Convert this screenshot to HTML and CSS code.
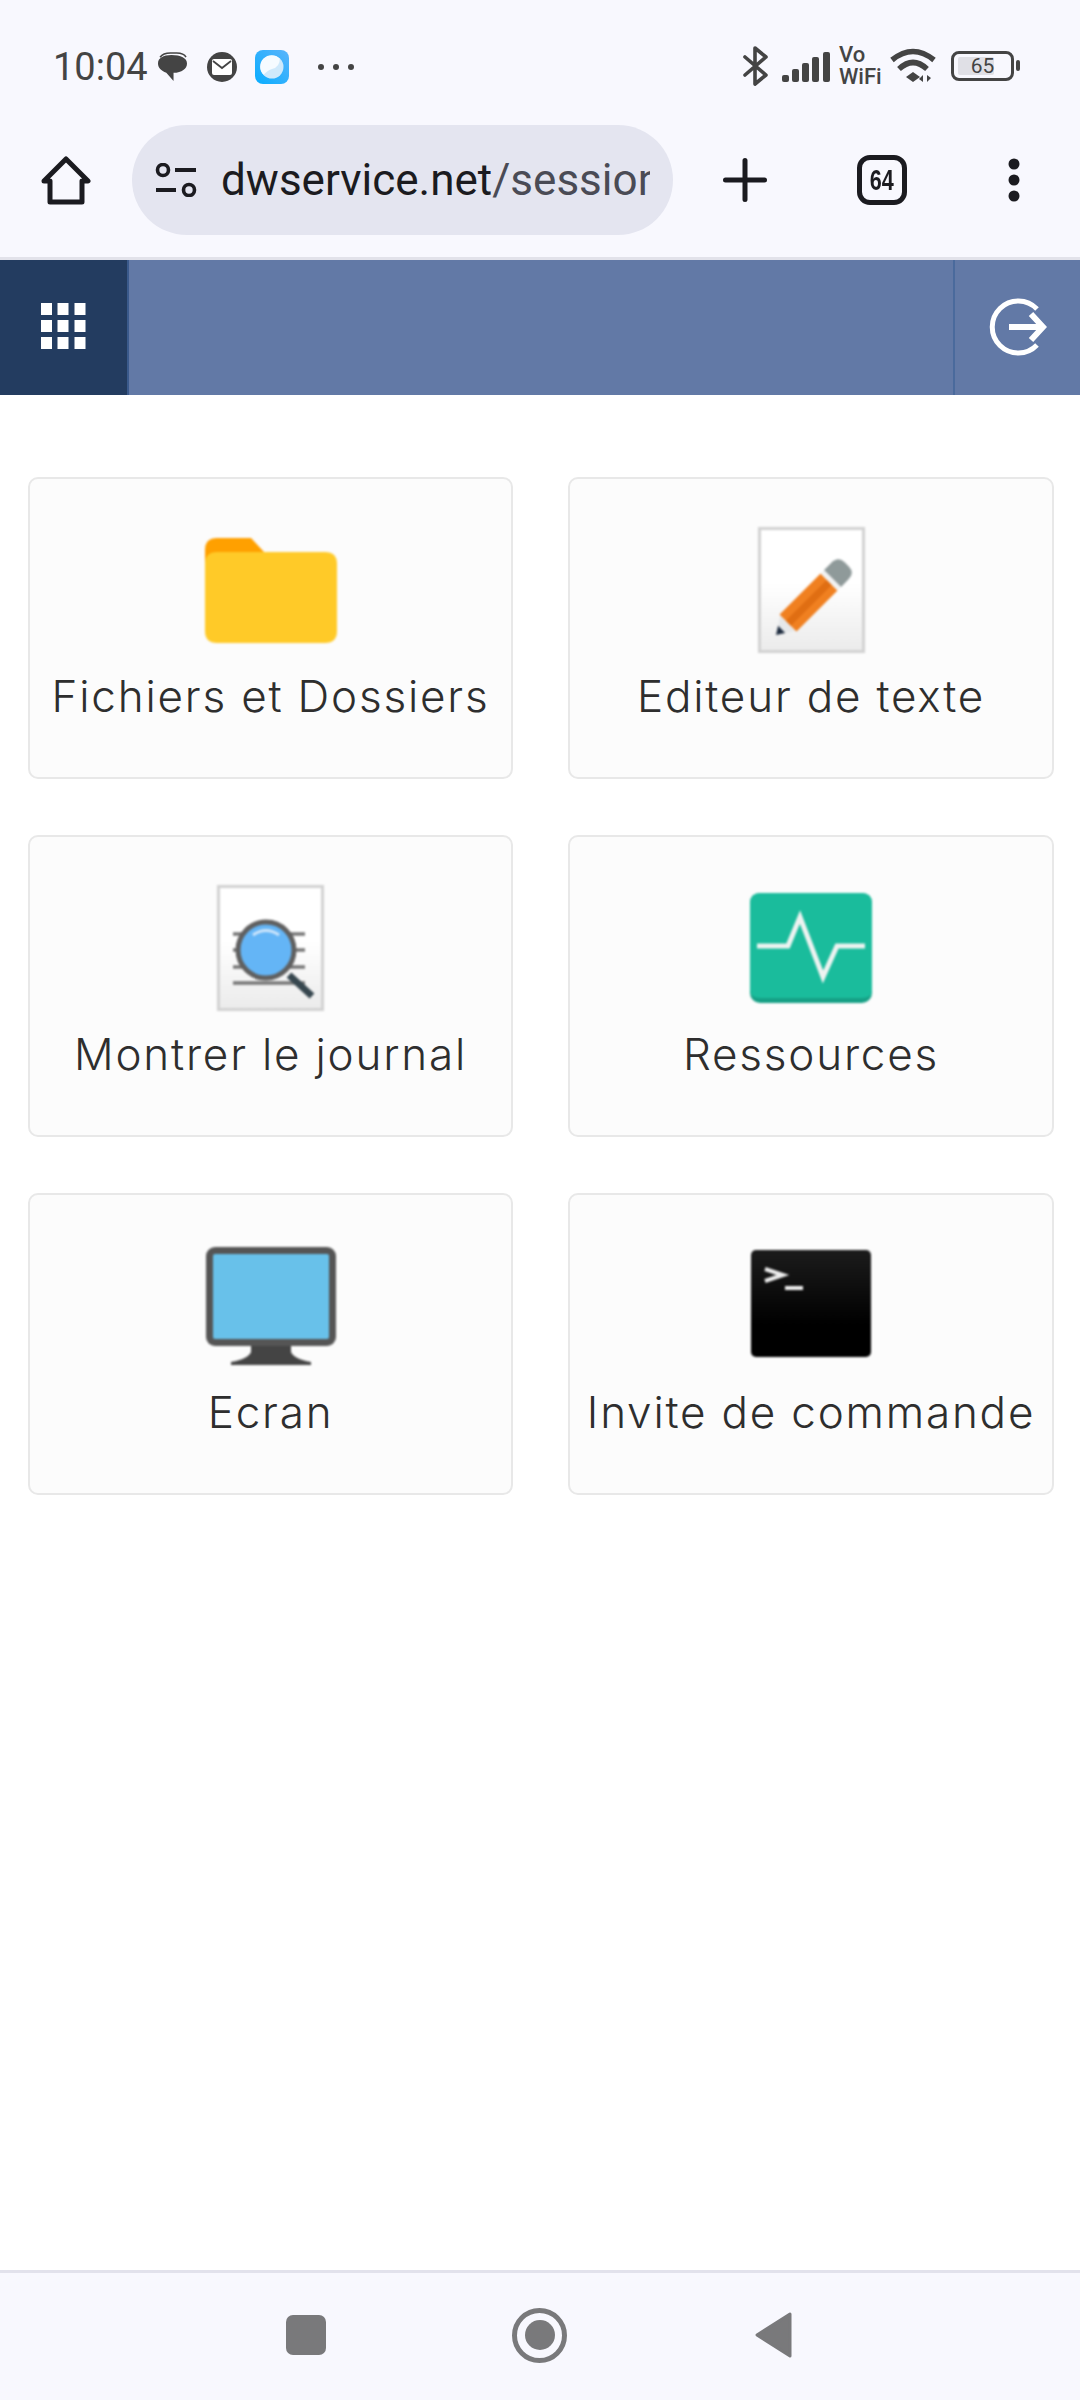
FILE: index.html
```html
<!DOCTYPE html>
<html>
<head>
    <title>DWService</title>
    <link rel="stylesheet" href="styles.css">
</head>

<body>
    <div class="status-bar">
        <div class="status-left">
            <span class="clock">10:04</span>
            <svg class="ic-bubble" width="29" height="29" viewBox="0 0 28 28">
                <path d="M2 5 Q5 1 12 1 H18 Q25 1 27 5" fill="none" stroke="#444" stroke-width="1.5"/>
                <path d="M13 3 C5 3 0 6 0 11 C0 15 3 18 8 20 L15 28 V20 C23 20 28 16 28 11 C28 6 22 3 13 3 Z" fill="#444"/>
            </svg>
            <svg class="ic-mail" width="30" height="30" viewBox="0 0 30 30">
                <circle cx="15" cy="15" r="15" fill="#444"/>
                <rect x="5" y="7" width="20" height="16" rx="2" fill="#fff"/>
                <path d="M6 9 L15 16 L24 9" fill="none" stroke="#444" stroke-width="1.8"/>
            </svg>
            <svg class="ic-app" width="34" height="34" viewBox="0 0 34 34">
                <defs>
                    <linearGradient id="appBg" x1="1" y1="0" x2="0" y2="1">
                        <stop offset="0" stop-color="#5ab4fb"/>
                        <stop offset="1" stop-color="#08adff"/>
                    </linearGradient>
                </defs>
                <rect width="34" height="34" rx="8" fill="url(#appBg)"/>
                <circle cx="17" cy="17" r="11.5" fill="#cfe9fb"/>
                <path d="M8.5 24.8 A11.5 11.5 0 0 1 24.8 8.5 Q25 17 17 19 Q13 20 8.5 24.8 Z" fill="#f6fbff"/>
            </svg>
            <div class="more-dots"><i></i><i></i><i></i></div>
        </div>
        <div class="status-right">
            <svg class="ic-bt" width="26" height="40" viewBox="0 0 26 40">
                <path d="M2 11 L23 29 L12 38 V2 L23 11 L2 29" fill="none" stroke="#444" stroke-width="3.6" stroke-linejoin="round" stroke-linecap="round"/>
            </svg>
            <svg class="ic-signal" width="48" height="30" viewBox="0 0 48 30">
                <rect x="0" y="23" width="7" height="7" rx="2" fill="#444"/>
                <rect x="10" y="17" width="7" height="13" rx="2" fill="#444"/>
                <rect x="20" y="11" width="7" height="19" rx="2" fill="#444"/>
                <rect x="30" y="5" width="7" height="25" rx="2" fill="#444"/>
                <rect x="41" y="0" width="7" height="30" rx="2" fill="#444"/>
            </svg>
            <div class="vowifi"><span>Vo</span><span>WiFi</span></div>
            <svg class="ic-wifi" width="46" height="35" viewBox="0 0 46 35">
                <path d="M2 12 Q23 -5 44 12" fill="none" stroke="#444" stroke-width="5.500"/>
                <path d="M9 21 Q23 8 37 21" fill="none" stroke="#444" stroke-width="5.500"/>
                <path d="M16 29 L23 24 L30 29 L23 34 Z" fill="#444"/>
                <path d="M33 34 V27 L29 31 Z M37 27 V34 L41 30 Z" fill="#444"/>
            </svg>
            <div class="battery">
                <div class="battery-box"><span class="battery-fill"></span><span class="battery-num">65</span></div>
                <span class="battery-nub"></span>
            </div>
        </div>
    </div>

    <div class="toolbar">
        <svg class="ic-home" width="50" height="50" viewBox="0 0 50 50">
            <path d="M3 26 L25 4 L47 26 H41 V47 H9 V26 Z" fill="none" stroke="#1b1b20" stroke-width="5" stroke-linejoin="round"/>
        </svg>
        <div class="url-pill">
            <svg class="ic-tune" width="42" height="34" viewBox="0 0 42 34">
                <circle cx="8" cy="7" r="5.500" fill="none" stroke="#1b1b20" stroke-width="3.6"/>
                <path d="M20 7 H41 M1 27 H21" stroke="#1b1b20" stroke-width="4"/>
                <circle cx="34" cy="27" r="5.500" fill="none" stroke="#1b1b20" stroke-width="3.6"/>
            </svg>
            <div class="url-text"><span class="url-host">dwservice.net</span><span class="url-path">/session</span></div>
        </div>
        <svg class="ic-plus" width="44" height="44" viewBox="0 0 44 44">
            <path d="M2.500 22 H41.500 M22 2.500 V41.500" stroke="#1b1b20" stroke-width="5" stroke-linecap="round"/>
        </svg>
        <div class="tab-count"><span>64</span></div>
        <svg class="ic-menu" width="12" height="44" viewBox="0 0 12 44">
            <circle cx="6" cy="6" r="5.500" fill="#1b1b20"/>
            <circle cx="6" cy="22" r="5.500" fill="#1b1b20"/>
            <circle cx="6" cy="38" r="5.500" fill="#1b1b20"/>
        </svg>
    </div>

    <div class="header">
        <div class="header-menu">
            <svg width="45" height="46" viewBox="0 0 45 46">
                <path fill="#fff" d="M0 0h11v12H0z M16.500 0h11v12h-11z M33.500 0h11v12h-11z M0 17h11v12H0z M16.500 17h11v12h-11z M33.500 17h11v12h-11z M0 34h11v12H0z M16.500 34h11v12h-11z M33.500 34h11v12h-11z"/>
            </svg>
        </div>
        <div class="header-fill"></div>
        <div class="header-exit">
            <svg width="58" height="60" viewBox="0 0 58 60">
                <path d="M48 12 A26 26 0 1 0 48 48" fill="none" stroke="#fff" stroke-width="5"/>
                <path d="M20 30 H52" stroke="#fff" stroke-width="6"/>
                <path d="M42 17 L54 30 L42 43" fill="none" stroke="#fff" stroke-width="6"/>
            </svg>
        </div>
    </div>

    <div class="apps">
        <div class="app-card">
            <div class="app-icon">
                <svg class="soft" width="132" height="105" viewBox="0 0 132 105">
                    <path d="M0 40 V12 Q0 0 12 0 H46 L60 15 V40 Z" fill="#ffa000"/>
                    <path d="M0 26 Q0 14 12 14 H120 Q132 14 132 26 V93 Q132 105 120 105 H12 Q0 105 0 93 Z" fill="#ffca28"/>
                </svg>
            </div>
            <div class="app-label">Fichiers et Dossiers</div>
        </div>
        <div class="app-card">
            <div class="app-icon">
                <svg class="soft" width="107" height="126" viewBox="0 0 107 126">
                    <defs>
                        <linearGradient id="docBg" x1="0" y1="0" x2="0" y2="1">
                            <stop offset="0.45" stop-color="#ffffff"/>
                            <stop offset="1" stop-color="#ebebeb"/>
                        </linearGradient>
                    </defs>
                    <rect x="1.500" y="1.500" width="104" height="123" fill="url(#docBg)" stroke="#d2d2d2" stroke-width="3"/>
                    <g transform="translate(18 108) rotate(-45)">
                        <path d="M0 0 L17 -11 V11 Z" fill="#e6e8ea"/>
                        <path d="M0 0 L8 -5 V5 Z" fill="#1f2d40"/>
                        <rect x="17" y="-12" width="58" height="24" fill="#f08020"/>
                        <rect x="17" y="-3" width="58" height="7" fill="#e06e12"/>
                        <rect x="75" y="-12" width="5" height="24" fill="#f2f2f2"/>
                        <path d="M80 -12 H90 Q100 -12 100 -3 V3 Q100 12 90 12 H80 Z" fill="#8f9a9a"/>
                    </g>
                </svg>
            </div>
            <div class="app-label">Editeur de texte</div>
        </div>
        <div class="app-card">
            <div class="app-icon">
                <svg class="soft" width="107" height="126" viewBox="0 0 107 126">
                    <defs>
                        <linearGradient id="logBg" x1="0" y1="0" x2="0" y2="1">
                            <stop offset="0.45" stop-color="#ffffff"/>
                            <stop offset="1" stop-color="#ebebeb"/>
                        </linearGradient>
                    </defs>
                    <rect x="1.500" y="1.500" width="104" height="123" fill="url(#logBg)" stroke="#d2d2d2" stroke-width="3"/>
                    <path d="M16 49 H88 M16 65 H88 M16 82 H88 M16 98 H88" stroke="#777" stroke-width="3.500"/>
                    <path d="M72 90 L95 111" stroke="#37474f" stroke-width="7"/>
                    <circle cx="49" cy="65" r="28" fill="#64b5f6" stroke="#606060" stroke-width="5"/>
                    <path d="M36 50 Q49 41 62 50" fill="none" stroke="#cfe6fb" stroke-width="3"/>
                </svg>
            </div>
            <div class="app-label">Montrer le journal</div>
        </div>
        <div class="app-card">
            <div class="app-icon">
                <svg class="soft" width="122" height="110" viewBox="0 0 122 110">
                    <rect width="122" height="110" rx="10" fill="#16a085"/>
                    <path d="M0 10 Q0 0 10 0 H112 Q122 0 122 10 V97 Q122 105 112 105 H10 Q0 105 0 97 Z" fill="#1abc9c"/>
                    <path d="M7 53 H38 L50 24 L73 84 L87 53 H115" fill="none" stroke="#eef3f1" stroke-width="5"/>
                </svg>
            </div>
            <div class="app-label">Ressources</div>
        </div>
        <div class="app-card">
            <div class="app-icon">
                <svg class="soft" width="130" height="118" viewBox="0 0 130 118">
                    <path d="M45 95 H85 V105 Q88 112 105 115 V118 H25 V115 Q42 112 45 105 Z" fill="#444"/>
                    <rect width="130" height="99" rx="9" fill="#555"/>
                    <rect x="7" y="7" width="116" height="85" rx="2" fill="#68c1ea"/>
                </svg>
            </div>
            <div class="app-label">Ecran</div>
        </div>
        <div class="app-card">
            <div class="app-icon">
                <svg class="soft term-icon" width="120" height="107" viewBox="0 0 120 107">
                    <defs>
                        <linearGradient id="termBg" x1="0" y1="0" x2="0" y2="1">
                            <stop offset="0" stop-color="#1c1c1c"/>
                            <stop offset="0.7" stop-color="#000"/>
                        </linearGradient>
                    </defs>
                    <rect width="120" height="107" rx="5" fill="url(#termBg)"/>
                    <path d="M14 19 L32 25 L14 31" fill="none" stroke="#eee" stroke-width="4"/>
                    <path d="M34 38 H52" stroke="#eee" stroke-width="4"/>
                </svg>
            </div>
            <div class="app-label">Invite de commande</div>
        </div>
    </div>

    <div class="nav-bar">
        <span class="nav-square"></span>
        <span class="nav-home"><span></span></span>
        <svg class="nav-back" width="37" height="46" viewBox="0 0 37 46">
            <path d="M35 2 V44 L2 23 Z" fill="#79797b" stroke="#79797b" stroke-width="3" stroke-linejoin="round"/>
        </svg>
    </div>
</body>
</html>
```

FILE: styles.css
```css
* {
    box-sizing: border-box;
}

html, body {
    margin: 0;
    padding: 0;
}

body {
    width: 1080px;
    height: 2400px;
    display: flex;
    flex-direction: column;
    background: #fff;
    font-family: 'Roboto', sans-serif;
    overflow: hidden;
}

svg {
    display: block;
    flex: none;
}

.soft {
    filter: blur(0.8px);
}

/* status bar */
.status-bar {
    height: 125px;
    padding: 0 60px 0 53px;
    display: flex;
    justify-content: space-between;
    align-items: center;
    background: #f8f8fe;
}

.status-left, .status-right {
    display: flex;
    align-items: center;
}

.status-left {
    padding-top: 8px;
}

.status-right {
    padding-top: 6px;
}

.clock {
    font-size: 38px;
    color: #444;
    width: 105px;
}

.ic-mail {
    margin-left: 20px;
}

.ic-app {
    margin-left: 18px;
}

.more-dots {
    display: flex;
    gap: 9px;
    margin-left: 29px;
}

.more-dots i {
    width: 6px;
    height: 6px;
    border-radius: 50%;
    background: #444;
}

.ic-signal {
    margin-left: 13px;
    margin-top: 2px;
}

.vowifi {
    margin-left: 9px;
    width: 42px;
    display: flex;
    flex-direction: column;
    font-size: 22px;
    line-height: 22px;
    font-weight: 500;
    color: #444;
}

.ic-wifi {
    margin-left: 9px;
}

.battery {
    display: flex;
    align-items: center;
    margin-left: 15px;
}

.battery-box {
    position: relative;
    width: 63px;
    height: 30px;
    border: 3px solid #444;
    border-radius: 8px;
    display: flex;
    align-items: center;
    justify-content: center;
}

.battery-fill {
    position: absolute;
    left: 4px;
    top: 3px;
    bottom: 3px;
    width: 36px;
    background: #e0e0e6;
    border-radius: 2px;
}

.battery-num {
    position: relative;
    font-size: 21px;
    color: #444;
}

.battery-nub {
    width: 4px;
    height: 11px;
    margin-left: 2px;
    border-radius: 2px;
    background: #444;
}

/* browser toolbar */
.toolbar {
    height: 135px;
    padding: 0 59px 22px 41px;
    display: flex;
    align-items: center;
    background: #f8f8fe;
    border-bottom: 3px solid #e2e2ea;
}

.url-pill {
    width: 541px;
    height: 110px;
    margin-left: 41px;
    padding: 0 23px 0 23px;
    display: flex;
    align-items: center;
    background: #e4e5f0;
    border-radius: 55px;
}

.url-text {
    margin-left: 24px;
    font-size: 44px;
    white-space: nowrap;
    overflow: hidden;
    flex: 1;
}

.url-host {
    color: #1b1b20;
}

.url-path {
    color: #4a4b55;
}

.ic-plus {
    margin-left: 50px;
}

.tab-count {
    width: 50px;
    height: 50px;
    margin-left: 90px;
    border: 5px solid #1b1b20;
    border-radius: 13px;
    display: flex;
    align-items: center;
    justify-content: center;
    font-family: 'Liberation Sans', sans-serif;
    font-size: 30px;
    font-weight: bold;
    color: #1b1b20;
}

.tab-count span {
    display: inline-block;
    transform: scaleX(0.72);
}

.ic-menu {
    margin-left: 101px;
}

/* app header */
.header {
    height: 135px;
    display: flex;
    background: #6279a6;
}

.header-menu {
    width: 129px;
    padding-left: 41px;
    padding-top: 43px;
    background: #233c60;
    border-right: 2px solid #3a5a8c;
}

.header-fill {
    flex: 1;
}

.header-exit {
    width: 127px;
    padding-top: 37px;
    padding-left: 34px;
    border-left: 2px solid #4a6a9c;
}

/* app cards */
.apps {
    flex: 1;
    padding: 82px 26px 0 28px;
    display: grid;
    grid-template-columns: 485px 486px;
    grid-auto-rows: 302px;
    column-gap: 55px;
    row-gap: 56px;
    align-content: start;
}

.app-card {
    padding-top: 48px;
    background: #fcfcfc;
    border: 2px solid #e8e8e8;
    border-radius: 10px;
    display: flex;
    flex-direction: column;
    align-items: center;
}

.app-icon {
    height: 126px;
    display: flex;
    align-items: center;
    justify-content: center;
}

.term-icon {
    margin-bottom: 5px;
}

.app-label {
    margin-top: 18px;
    font-family: 'Inter', sans-serif;
    font-size: 44px;
    font-weight: 300;
    letter-spacing: 1.8px;
    line-height: 50px;
    color: #2e2e2e;
    white-space: nowrap;
}

/* nav bar */
.nav-bar {
    height: 130px;
    padding-left: 286px;
    padding-bottom: 3px;
    display: flex;
    align-items: center;
    background: #f8f8fe;
    border-top: 3px solid #e2e2ec;
}

.nav-square {
    width: 40px;
    height: 40px;
    border-radius: 7px;
    background: #79797b;
}

.nav-home {
    width: 55px;
    height: 55px;
    margin-left: 186px;
    border: 5px solid #79797b;
    border-radius: 50%;
    display: flex;
    align-items: center;
    justify-content: center;
}

.nav-home span {
    width: 30px;
    height: 30px;
    border-radius: 50%;
    background: #79797b;
}

.nav-back {
    margin-left: 188px;
}
```
